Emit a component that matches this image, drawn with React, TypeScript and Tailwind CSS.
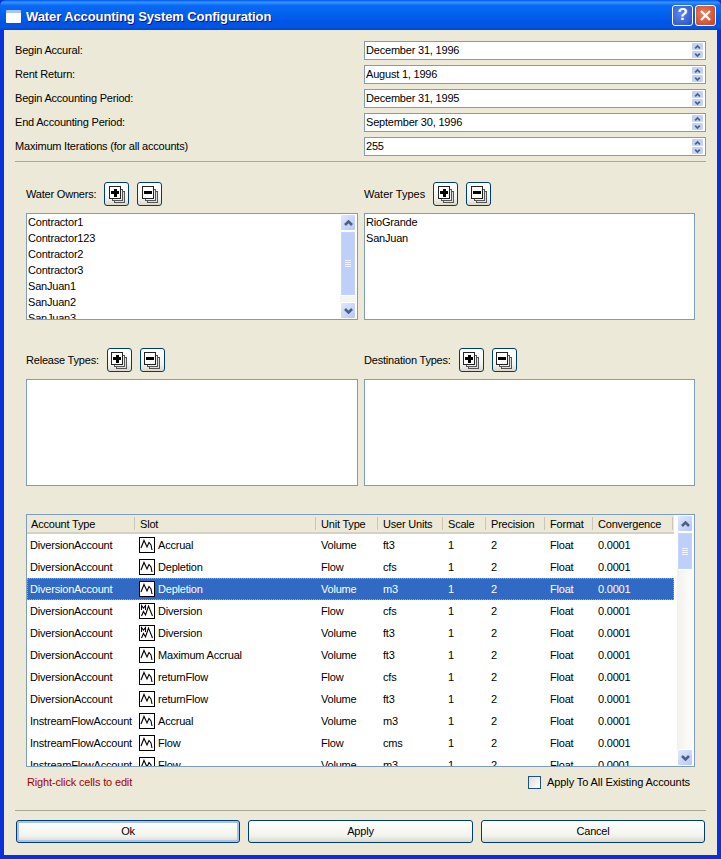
import React from 'react';

const fieldRows = [
  { label: 'Begin Accural:', value: 'December 31, 1996' },
  { label: 'Rent Return:', value: 'August 1, 1996' },
  { label: 'Begin Accounting Period:', value: 'December 31, 1995' },
  { label: 'End Accounting Period:', value: 'September 30, 1996' },
  { label: 'Maximum Iterations (for all accounts)', value: '255' },
];

const owners = ['Contractor1', 'Contractor123', 'Contractor2', 'Contractor3', 'SanJuan1', 'SanJuan2', 'SanJuan3'];

const gridCols = 'grid grid-cols-[108px_181px_62px_65px_43px_59px_48px_80px]';

const headers = ['Account Type', 'Slot', 'Unit Type', 'User Units', 'Scale', 'Precision', 'Format', 'Convergence'];

const accounts = [
  ['DiversionAccount', 'Accrual', 'Volume', 'ft3', 0],
  ['DiversionAccount', 'Depletion', 'Flow', 'cfs', 0],
  ['DiversionAccount', 'Depletion', 'Volume', 'm3', 0],
  ['DiversionAccount', 'Diversion', 'Flow', 'cfs', 1],
  ['DiversionAccount', 'Diversion', 'Volume', 'ft3', 1],
  ['DiversionAccount', 'Maximum Accrual', 'Volume', 'ft3', 0],
  ['DiversionAccount', 'returnFlow', 'Flow', 'cfs', 0],
  ['DiversionAccount', 'returnFlow', 'Volume', 'ft3', 0],
  ['InstreamFlowAccount', 'Accrual', 'Volume', 'm3', 0],
  ['InstreamFlowAccount', 'Flow', 'Flow', 'cms', 0],
  ['InstreamFlowAccount', 'Flow', 'Volume', 'm3', 0],
] as const;

const Chevron: React.FC<{ up?: boolean; small?: boolean }> = ({ up, small }) => (
  <svg width={small ? 7 : 9} height={small ? 4 : 6} viewBox="0 0 9 6" className="shrink-0">
    <path d={up ? 'M1 5 L4.5 1.5 L8 5' : 'M1 1 L4.5 4.5 L8 1'} fill="none" stroke="#4d6185" strokeWidth="2.6" />
  </svg>
);

const Spinner = () => (
  <div className="flex flex-col w-[11px] h-[15px] gap-px mr-[1px]">
    <div className="flex-1 flex items-center justify-center rounded-[1px] bg-[#c3d2f6]"><Chevron up small /></div>
    <div className="flex-1 flex items-center justify-center rounded-[1px] bg-[#c3d2f6]"><Chevron small /></div>
  </div>
);

const ScrollArrow: React.FC<{ up?: boolean }> = ({ up }) => (
  <div className="h-[17px] w-[16px] shrink-0 flex items-center justify-center rounded-[2px] border border-white bg-[linear-gradient(135deg,#dfe8fd,#b6c8f6)]">
    <Chevron up={up} />
  </div>
);

const ScrollThumb: React.FC<{ className: string }> = ({ className }) => (
  <div className={`${className} w-[16px] rounded-[2px] border border-white outline outline-1 -outline-offset-2 outline-[#c3d3fb] bg-[#bfd0f8] flex flex-col items-center justify-center gap-px`}>
    <div className="w-[6px] h-px bg-[#eef3fe]" />
    <div className="w-[6px] h-px bg-[#eef3fe]" />
    <div className="w-[6px] h-px bg-[#eef3fe]" />
    <div className="w-[6px] h-px bg-[#eef3fe]" />
  </div>
);

const PagesIcon: React.FC<{ plus?: boolean }> = ({ plus }) => (
  <svg width="16" height="17" viewBox="0 0 16 17" shapeRendering="crispEdges">
    <rect x="5.5" y="5.5" width="10" height="11" fill="#ddd" stroke="#555" />
    <rect x="3.5" y="3.5" width="10" height="11" fill="#eee" stroke="#555" />
    <rect x="0.5" y="0.5" width="11" height="12" rx="1" fill="#fff" stroke="#222" />
    <rect x="2" y="5" width="8" height="3" fill="#000" />
    {plus && <rect x="4.5" y="2.5" width="3" height="8" fill="#000" />}
  </svg>
);

const IconButton: React.FC<{ plus?: boolean }> = ({ plus }) => (
  <button className="w-[25px] h-[24px] flex items-center justify-center rounded-[3px] border border-[#003c74] bg-[linear-gradient(#fff,#f3f3ee_70%,#dcd8ca)]">
    <PagesIcon plus={plus} />
  </button>
);

const ListHeader: React.FC<{ label: string; labelClass?: string }> = ({ label, labelClass = '' }) => (
  <div className="flex items-center gap-[8px] h-[24px]">
    <span className={labelClass}>{label}</span>
    <div className="flex gap-[8px]">
      <IconButton plus />
      <IconButton />
    </div>
  </div>
);

const ListBox: React.FC<{ items?: string[]; scroll?: boolean }> = ({ items = [], scroll }) => (
  <div className="h-[107px] border border-[#7f9db9] bg-white flex overflow-hidden">
    <div className="flex-1 pl-[1px] overflow-hidden">
      {items.map((item) => (
        <div key={item} className="h-[16px] leading-[16px]">{item}</div>
      ))}
    </div>
    {scroll && (
      <div className="w-[16px] flex flex-col bg-[#f4f4f0] mr-px">
        <ScrollArrow up />
        <ScrollThumb className="h-[65px]" />
        <div className="flex-1" />
        <ScrollArrow />
      </div>
    )}
  </div>
);

const SlotIcon: React.FC<{ dense?: boolean }> = ({ dense }) => (
  <svg width="16" height="16" viewBox="0 0 16 16" className="shrink-0">
    <rect x="0.5" y="0.5" width="15" height="15" fill="#fff" stroke="#000" />
    {dense ? (
      <path d="M2.5 7 V2.5 L4.5 5 L6.5 2.5 V7 M2.5 13 L4.5 8.5 L6.5 12 L9.5 3 L13.5 13" fill="none" stroke="#000" strokeWidth="1.1" />
    ) : (
      <path d="M2 11 L5 3.5 L8 10 L10 5.5 L12 8 L13 13" fill="none" stroke="#000" strokeWidth="1.1" />
    )}
  </svg>
);

const XpButton: React.FC<{ label: string; primary?: boolean }> = ({ label, primary }) => (
  <button
    className={`h-[23px] rounded-[3px] border border-[#003c74] bg-[linear-gradient(#fff,#f3f3ee_70%,#dcd8ca)] ${
      primary ? 'shadow-[inset_0_0_0_2px_#a9c2e8]' : ''
    }`}
  >
    {label}
  </button>
);

export default function App() {
  return (
    <div className="w-[721px] h-[859px] flex flex-col [font-family:Liberation_Sans,sans-serif] text-[11px] tracking-[-0.2px] text-black bg-[#0831d9]">
      {/* title bar */}
      <div className="h-[30px] shrink-0 flex items-center pt-[3px] pl-[6px] pr-[5px] rounded-t-[6px] bg-[linear-gradient(#0058ee_0%,#3593ff_8%,#0a6af5_18%,#0262ee_45%,#0054e3_75%,#0055ea_90%,#0046c8_100%)]">
        <div className="w-[15px] h-[13px] bg-white border-t-[3px] border-[#a9c4f5] rounded-[1px]" />
        <span className="ml-[5px] text-[13px] tracking-[-0.1px] font-bold text-white [text-shadow:1px_1px_0_#0f1089]">
          Water Accounting System Configuration
        </span>
        <div className="ml-auto flex gap-[2px] -mt-[3px]">
          <div className="w-[21px] h-[21px] rounded-[3px] border border-white bg-[radial-gradient(circle_at_40%_40%,#5b86ee,#2a4fc8)] flex items-center justify-center text-white text-[17px] font-bold">
            ?
          </div>
          <div className="w-[21px] h-[21px] rounded-[3px] border border-white bg-[radial-gradient(circle_at_40%_40%,#e8805f,#c83f1c)] flex items-center justify-center">
            <svg width="13" height="13" viewBox="0 0 13 13">
              <path d="M2 2 L11 11 M11 2 L2 11" stroke="#fff" strokeWidth="2.4" />
            </svg>
          </div>
        </div>
      </div>

      {/* dialog body */}
      <div className="flex-1 mx-[4px] mb-[4px] bg-[#ece9d8] flex flex-col pt-[11px] pl-[11px] pr-[11px]">
        <div className="flex flex-col gap-[5px]">
          {fieldRows.map((row) => (
            <div key={row.label} className="grid grid-cols-[349px_342px] items-center h-[19px]">
              <span>{row.label}</span>
              <div className="h-[19px] border border-[#7f9db9] bg-white flex items-center justify-between pl-[1px] pr-px">
                <span>{row.value}</span>
                <Spinner />
              </div>
            </div>
          ))}
        </div>
        <div className="mt-[5px] h-[2px] w-[691px] border-t border-[#aca899]" />

        <div className="pl-[11px] mt-[19px] grid grid-cols-[332px_331px] gap-x-[6px]">
          <div className="flex flex-col gap-[7px]">
            <ListHeader label="Water Owners:" />
            <ListBox items={owners} scroll />
          </div>
          <div className="flex flex-col gap-[7px]">
            <ListHeader label="Water Types" labelClass="tracking-normal" />
            <ListBox items={['RioGrande', 'SanJuan']} />
          </div>
          <div className="flex flex-col gap-[7px] mt-[28px]">
            <ListHeader label="Release Types:" />
            <ListBox />
          </div>
          <div className="flex flex-col gap-[7px] mt-[28px]">
            <ListHeader label="Destination Types:" />
            <ListBox />
          </div>
        </div>

        {/* account table */}
        <div className="ml-[11px] mt-[28px] w-[669px] h-[253px] border border-[#7f9db9] bg-white flex overflow-hidden">
          <div className="w-[647px] flex flex-col overflow-hidden">
            <div className={`${gridCols} h-[19px] shrink-0 bg-[#ece9d8] border-b-2 border-[#d6d2c2]`}>
              {headers.map((h, i) => (
                <div
                  key={h}
                  className={`${i === 0 ? 'pl-[4px]' : 'pl-[5px]'} my-[2px] leading-[15px] border-r border-[#cbc7b8] whitespace-nowrap overflow-hidden`}
                >
                  {h}
                </div>
              ))}
            </div>
            {accounts.map(([account, slot, unit, userUnit, dense], i) => {
              const selected = i === 2;
              return (
                <div
                  key={i}
                  className={`${gridCols} h-[22px] shrink-0 items-center ${
                    selected ? 'bg-[#316ac5] text-white outline-1 -outline-offset-1 outline-dotted outline-[#c9a25a]' : ''
                  }`}
                >
                  <div className="pl-[3px] whitespace-nowrap">{account}</div>
                  <div className="pl-[4px] flex items-center gap-[3px]">
                    <SlotIcon dense={dense === 1} />
                    <span>{slot}</span>
                  </div>
                  <div className="pl-[5px]">{unit}</div>
                  <div className="pl-[5px]">{userUnit}</div>
                  <div className="pl-[5px]">1</div>
                  <div className="pl-[5px]">2</div>
                  <div className="pl-[5px]">Float</div>
                  <div className="pl-[5px]">0.0001</div>
                </div>
              );
            })}
          </div>
          <div className="ml-auto mr-px w-[16px] flex flex-col bg-[linear-gradient(90deg,#f3f1ec,#fdfdfb)]">
            <ScrollArrow up />
            <ScrollThumb className="h-[38px]" />
            <div className="flex-1" />
            <ScrollArrow />
          </div>
        </div>

        <div className="ml-[12px] mt-[8px] h-[15px] w-[663px] flex items-center justify-between">
          <span className="text-[#a80000] tracking-[-0.15px]">Right-click cells to edit</span>
          <label className="flex items-center gap-[6px] tracking-[-0.1px]">
            <span className="w-[13px] h-[13px] border border-[#1c5180] bg-[linear-gradient(135deg,#dcdcd7,#fff)]" />
            <span>Apply To All Existing Accounts</span>
          </label>
        </div>

        <div className="mt-[20px] h-[2px] w-[691px] border-t border-[#aca899]" />

        <div className="mt-[8px] ml-px grid grid-cols-[224px_225px_224px] gap-x-[8px]">
          <XpButton label="Ok" primary />
          <XpButton label="Apply" />
          <XpButton label="Cancel" />
        </div>
      </div>
    </div>
  );
}
